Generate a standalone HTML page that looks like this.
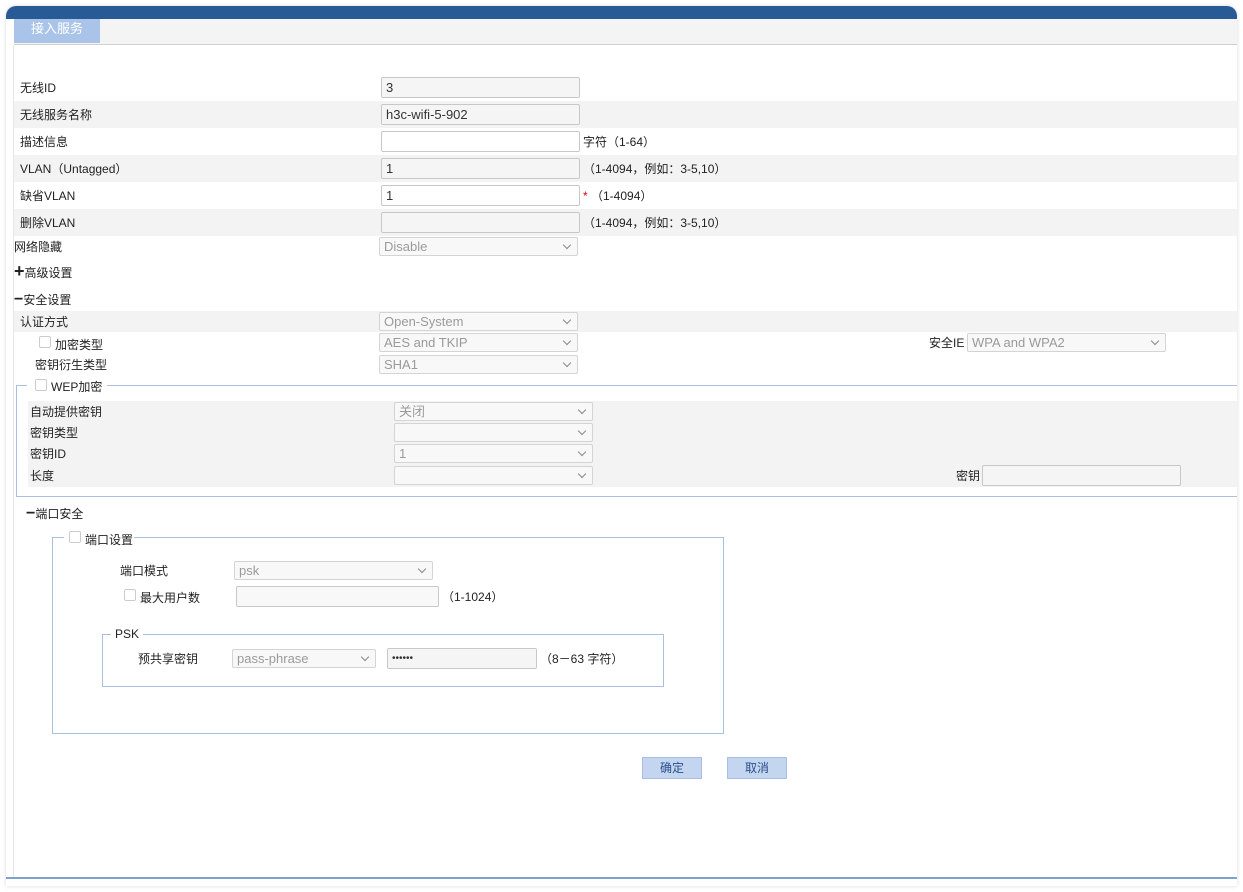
<!DOCTYPE html>
<html><head><meta charset="utf-8"><style>
*{box-sizing:border-box;margin:0;padding:0}
body{width:1243px;height:892px;background:#fff;position:relative;font-family:"Liberation Sans","Noto Sans CJK SC",sans-serif;font-size:12px;color:#222;overflow:hidden}
.a{position:absolute}
.t{position:absolute;white-space:nowrap;line-height:14px}
.in{position:absolute;height:21px;background:#f5f5f5;border:1px solid #c8c8c8;border-radius:2px;font-size:13px;color:#333;padding-left:4px;line-height:19px}
.sel{position:absolute;height:19px;background:#f8f8f8;border:1px solid #d4d4d4;border-radius:2px;font-size:13px;color:#9a9a9a;padding-left:4px;line-height:17px}
.sel:after{content:"";position:absolute;right:7px;top:4px;width:5px;height:5px;border-right:1.5px solid #888;border-bottom:1.5px solid #888;transform:rotate(45deg)}
.g{position:absolute;background:#f3f3f3}
.cb{position:absolute;width:12px;height:12px;border:1px solid #ccc;border-radius:2px;background:#fff}
.fs{position:absolute;border:1px solid #a9c0df}
.btn{position:absolute;width:60px;height:22px;background:#c4d5f0;border:1px solid #a8bfe3;color:#2a4f8a;text-align:center;line-height:20px;font-size:12px}
</style></head><body>
<div class="a" style="left:6px;top:6px;width:1231px;height:880px;border-radius:10px 10px 0 0;box-shadow:0 0 4px rgba(0,0,0,.15)"></div>
<div class="a" style="left:6px;top:6px;width:1231px;height:13px;background:#285a96;border-radius:10px 10px 0 0"></div>
<div class="a" style="left:14px;top:19px;width:1223px;height:26px;background:#f4f4f4;border-bottom:1px solid #d0d0d0"></div>
<div class="a" style="left:14px;top:19px;width:86px;height:24px;background:#a9c4e8;color:#fff;font-size:13px;text-align:center;line-height:20px">接入服务</div>
<div class="a" style="left:13px;top:45px;width:1px;height:833px;background:#e6e6e6"></div>
<div class="a" style="left:6px;top:877px;width:1231px;height:2px;background:#7da2d0"></div>

<div class="g" style="left:14px;top:101px;width:1223px;height:27px"></div>
<div class="g" style="left:14px;top:155px;width:1223px;height:27px"></div>
<div class="g" style="left:14px;top:209px;width:1223px;height:27px"></div>
<div class="t" style="left:20px;top:81px">无线ID</div><div class="in" style="left:381px;top:77px;width:199px">3</div>
<div class="t" style="left:20px;top:108px">无线服务名称</div><div class="in" style="left:381px;top:104px;width:199px">h3c-wifi-5-902</div>
<div class="t" style="left:20px;top:135px">描述信息</div><div class="in" style="left:381px;top:131px;width:199px;background:#fff"></div><div class="t" style="left:583px;top:135px">字符（1-64）</div>
<div class="t" style="left:20px;top:162px">VLAN（Untagged）</div><div class="in" style="left:381px;top:158px;width:199px">1</div><div class="t" style="left:583px;top:162px">（1-4094，例如：3-5,10）</div>
<div class="t" style="left:20px;top:189px">缺省VLAN</div><div class="in" style="left:381px;top:185px;width:199px;background:#fff">1</div><div class="t" style="left:583px;top:189px"><span style="color:#d00">*</span> （1-4094）</div>
<div class="t" style="left:20px;top:216px">删除VLAN</div><div class="in" style="left:381px;top:212px;width:199px"></div><div class="t" style="left:583px;top:216px">（1-4094，例如：3-5,10）</div>
<div class="t" style="left:14px;top:240px">网络隐藏</div><div class="sel" style="left:379px;top:237px;width:199px">Disable</div>
<div class="t" style="left:14px;top:265px"><b style="font-size:18px;line-height:12px">+</b>高级设置</div>
<div class="t" style="left:14px;top:293px"><b style="font-size:16px">−</b>安全设置</div>
<div class="g" style="left:14px;top:311px;width:1223px;height:21px"></div>
<div class="t" style="left:20px;top:315px">认证方式</div><div class="sel" style="left:379px;top:312px;width:199px">Open-System</div>
<div class="cb" style="left:39px;top:336px"></div><div class="t" style="left:55px;top:338px">加密类型</div><div class="sel" style="left:379px;top:333px;width:199px">AES and TKIP</div>
<div class="t" style="left:929px;top:336px">安全IE</div><div class="sel" style="left:967px;top:333px;width:199px">WPA and WPA2</div>
<div class="t" style="left:35px;top:358px">密钥衍生类型</div><div class="sel" style="left:379px;top:355px;width:199px">SHA1</div>

<div class="fs" style="left:16px;top:385px;width:1221px;height:112px;border-right:none"></div>
<div class="a" style="left:27px;top:377px;width:80px;height:16px;background:#fff"></div>
<div class="cb" style="left:35px;top:379px"></div><div class="t" style="left:51px;top:380px">WEP加密</div>
<div class="g" style="left:28px;top:401px;width:1209px;height:86px"></div>
<div class="t" style="left:30px;top:405px">自动提供密钥</div><div class="sel" style="left:394px;top:402px;width:199px">关闭</div>
<div class="t" style="left:30px;top:426px">密钥类型</div><div class="sel" style="left:394px;top:423px;width:199px"></div>
<div class="t" style="left:30px;top:447px">密钥ID</div><div class="sel" style="left:394px;top:444px;width:199px">1</div>
<div class="t" style="left:30px;top:469px">长度</div><div class="sel" style="left:394px;top:466px;width:199px"></div>
<div class="t" style="left:956px;top:469px">密钥</div><div class="in" style="left:982px;top:465px;width:199px"></div>

<div class="t" style="left:26px;top:507px"><b style="font-size:16px">−</b>端口安全</div>
<div class="fs" style="left:52px;top:537px;width:672px;height:197px"></div>
<div class="a" style="left:64px;top:530px;width:70px;height:16px;background:#fff"></div>
<div class="cb" style="left:69px;top:531px"></div><div class="t" style="left:85px;top:533px">端口设置</div>
<div class="t" style="left:120px;top:564px">端口模式</div><div class="sel" style="left:234px;top:561px;width:199px">psk</div>
<div class="cb" style="left:124px;top:589px"></div><div class="t" style="left:140px;top:591px">最大用户数</div><div class="in" style="left:236px;top:586px;width:203px;background:#f8f8f8"></div><div class="t" style="left:442px;top:590px">（1-1024）</div>
<div class="fs" style="left:102px;top:634px;width:562px;height:53px"></div>
<div class="a" style="left:111px;top:626px;width:32px;height:16px;background:#fff"></div>
<div class="t" style="left:115px;top:627px">PSK</div>
<div class="t" style="left:138px;top:652px">预共享密钥</div><div class="sel" style="left:232px;top:649px;width:144px">pass-phrase</div>
<div class="in" style="left:387px;top:648px;width:150px;font-size:10px">••••••</div><div class="t" style="left:540px;top:652px">（8－63 字符）</div>
<div class="btn" style="left:642px;top:757px">确定</div>
<div class="btn" style="left:727px;top:757px">取消</div>
</body></html>
